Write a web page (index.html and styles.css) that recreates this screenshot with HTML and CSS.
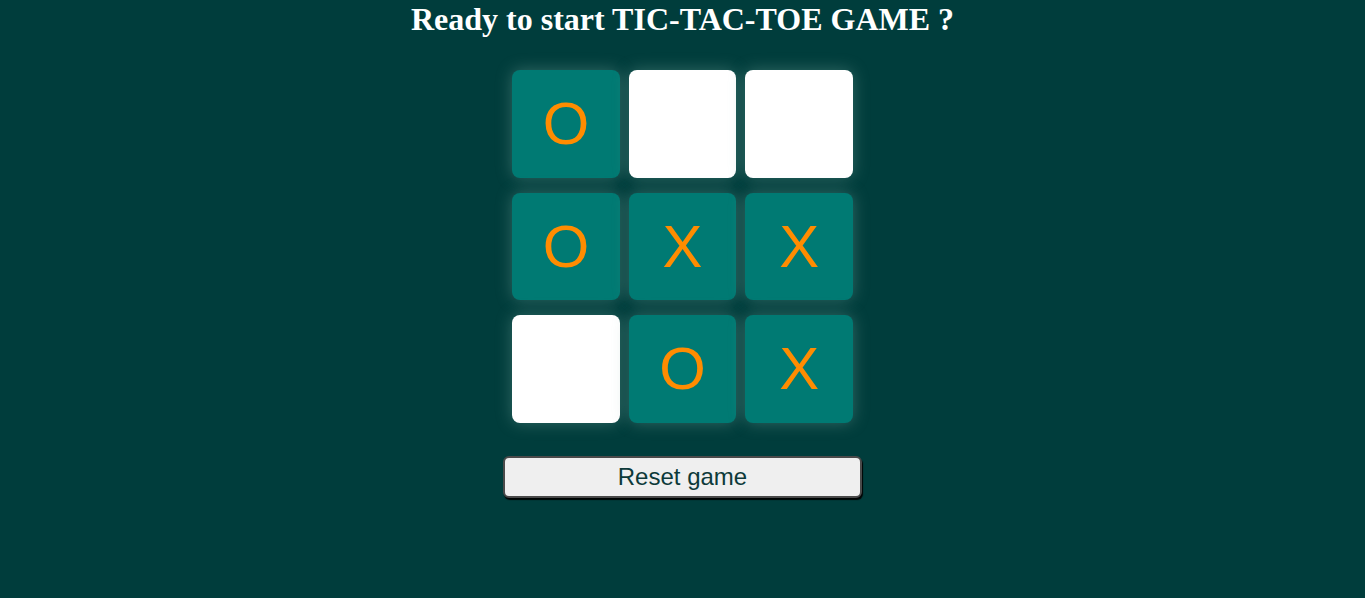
FILE: index.html
```html
<!DOCTYPE html>
<html lang="en">
<head>
<meta charset="UTF-8">
<title>Tic Tac Toe</title>
<link rel="stylesheet" href="styles.css">
</head>
<body>
<main class="game">
  <h1 class="title">Ready to start TIC-TAC-TOE GAME ?</h1>
  <div class="board">
    <button class="box played">O</button>
    <button class="box"></button>
    <button class="box"></button>
    <button class="box played">O</button>
    <button class="box played">X</button>
    <button class="box played">X</button>
    <button class="box"></button>
    <button class="box played">O</button>
    <button class="box played">X</button>
  </div>
  <button class="reset">Reset game</button>
</main>
</body>
</html>
```

FILE: styles.css
```css
html, body {
  margin: 0;
  padding: 0;
}
body {
  background-color: #003d3c;
  font-family: "Liberation Serif", "Times New Roman", serif;
  height: 100vh;
}
.game {
  display: flex;
  flex-direction: column;
  align-items: center;
}
.title {
  color: #ffffff;
  font-size: 32px;
  font-weight: bold;
  margin: 1px 0 0 0;
  line-height: 37px;
}
.board {
  margin-top: 29px;
  width: 60vmin;
  height: 60vmin;
  display: flex;
  flex-wrap: wrap;
  align-items: center;
  justify-content: center;
  gap: 1.5vmin;
}
.box {
  width: 18vmin;
  height: 18vmin;
  border: none;
  border-radius: 0.5rem;
  background-color: #ffffff;
  box-shadow: 0 0 1rem rgba(110, 160, 150, 0.45);
  font-family: "Liberation Sans", Arial, sans-serif;
  font-size: 10vmin;
  color: #ff8c00;
  padding: 0;
  cursor: pointer;
}
.box.played {
  background-color: #007a73;
}
.reset {
  margin-top: 30px;
  width: 60vmin;
  height: 42px;
  background-color: #efefef;
  border: 2px solid #4a4a4a;
  border-radius: 6px;
  box-shadow: 1px 2px 1px rgba(0, 0, 0, 0.95);
  font-family: "Liberation Sans", Arial, sans-serif;
  font-size: 24px;
  color: #0d3a3a;
  cursor: pointer;
}
```
